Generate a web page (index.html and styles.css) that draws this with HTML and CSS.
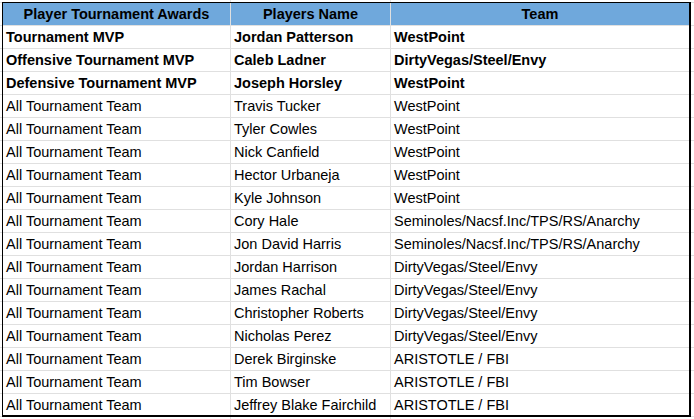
FILE: index.html
```html
<!DOCTYPE html>
<html>
<head>
<meta charset="utf-8">
<link rel="stylesheet" href="styles.css">
</head>
<body>
<div class="sheet">
  <div class="row head">
    <div class="cell">Player Tournament Awards</div>
    <div class="cell">Players Name</div>
    <div class="cell">Team</div>
  </div>
  <div class="row bold">
    <div class="cell">Tournament MVP</div>
    <div class="cell">Jordan Patterson</div>
    <div class="cell">WestPoint</div>
  </div>
  <div class="row bold">
    <div class="cell">Offensive Tournament MVP</div>
    <div class="cell">Caleb Ladner</div>
    <div class="cell">DirtyVegas/Steel/Envy</div>
  </div>
  <div class="row bold">
    <div class="cell">Defensive Tournament MVP</div>
    <div class="cell">Joseph Horsley</div>
    <div class="cell">WestPoint</div>
  </div>
  <div class="row">
    <div class="cell">All Tournament Team</div>
    <div class="cell">Travis Tucker</div>
    <div class="cell">WestPoint</div>
  </div>
  <div class="row">
    <div class="cell">All Tournament Team</div>
    <div class="cell">Tyler Cowles</div>
    <div class="cell">WestPoint</div>
  </div>
  <div class="row">
    <div class="cell">All Tournament Team</div>
    <div class="cell">Nick Canfield</div>
    <div class="cell">WestPoint</div>
  </div>
  <div class="row">
    <div class="cell">All Tournament Team</div>
    <div class="cell">Hector Urbaneja</div>
    <div class="cell">WestPoint</div>
  </div>
  <div class="row">
    <div class="cell">All Tournament Team</div>
    <div class="cell">Kyle Johnson</div>
    <div class="cell">WestPoint</div>
  </div>
  <div class="row">
    <div class="cell">All Tournament Team</div>
    <div class="cell">Cory Hale</div>
    <div class="cell">Seminoles/Nacsf.Inc/TPS/RS/Anarchy</div>
  </div>
  <div class="row">
    <div class="cell">All Tournament Team</div>
    <div class="cell">Jon David Harris</div>
    <div class="cell">Seminoles/Nacsf.Inc/TPS/RS/Anarchy</div>
  </div>
  <div class="row">
    <div class="cell">All Tournament Team</div>
    <div class="cell">Jordan Harrison</div>
    <div class="cell">DirtyVegas/Steel/Envy</div>
  </div>
  <div class="row">
    <div class="cell">All Tournament Team</div>
    <div class="cell">James Rachal</div>
    <div class="cell">DirtyVegas/Steel/Envy</div>
  </div>
  <div class="row">
    <div class="cell">All Tournament Team</div>
    <div class="cell">Christopher Roberts</div>
    <div class="cell">DirtyVegas/Steel/Envy</div>
  </div>
  <div class="row">
    <div class="cell">All Tournament Team</div>
    <div class="cell">Nicholas Perez</div>
    <div class="cell">DirtyVegas/Steel/Envy</div>
  </div>
  <div class="row">
    <div class="cell">All Tournament Team</div>
    <div class="cell">Derek Birginske</div>
    <div class="cell">ARISTOTLE / FBI</div>
  </div>
  <div class="row">
    <div class="cell">All Tournament Team</div>
    <div class="cell">Tim Bowser</div>
    <div class="cell">ARISTOTLE / FBI</div>
  </div>
  <div class="row last">
    <div class="cell">All Tournament Team</div>
    <div class="cell">Jeffrey Blake Fairchild</div>
    <div class="cell">ARISTOTLE / FBI</div>
  </div>
</div>
</body>
</html>
```
FILE: styles.css
```css
html, body {
  margin: 0;
  padding: 0;
}
body {
  width: 694px;
  height: 419px;
  overflow: hidden;
  font-family: "Liberation Sans", Arial, sans-serif;
  font-size: 14.5px;
  color: #000;
  background-color: #fff;
  background-image:
    linear-gradient(to right, transparent 230px, #e0e0e0 230px, #e0e0e0 231px, transparent 231px, transparent 390px, #e0e0e0 390px, #e0e0e0 391px, transparent 391px),
    linear-gradient(to bottom, #e0e0e0 0, #e0e0e0 1px, transparent 1px);
  background-size: 100% 100%, 100% 23px;
  background-position: 0 0, 0 2px;
  background-repeat: no-repeat, repeat-y;
}
.sheet {
  margin: 2px 0 0 2px;
  width: 689px;
  box-sizing: border-box;
  background: #fff;
  border-left: 1px solid #000;
  border-top: 1px solid #000;
  border-right: 2px solid #000;
  border-bottom: 2px solid #000;
}
.row {
  display: grid;
  grid-template-columns: 227px 160px 299px;
  height: 23px;
  border-top: 1px solid #e0e0e0;
  box-sizing: border-box;
}
.row.head {
  height: 22px;
  border-top: none;
  background: #6fa8dc;
  font-weight: bold;
  text-align: center;
}
.row.last {
  height: 22px;
}
.row.bold {
  font-weight: bold;
}
.cell {
  padding: 1px 3px 0;
  line-height: 21px;
  white-space: nowrap;
  overflow: hidden;
}
.cell + .cell {
  border-left: 1px solid #e0e0e0;
}
```
